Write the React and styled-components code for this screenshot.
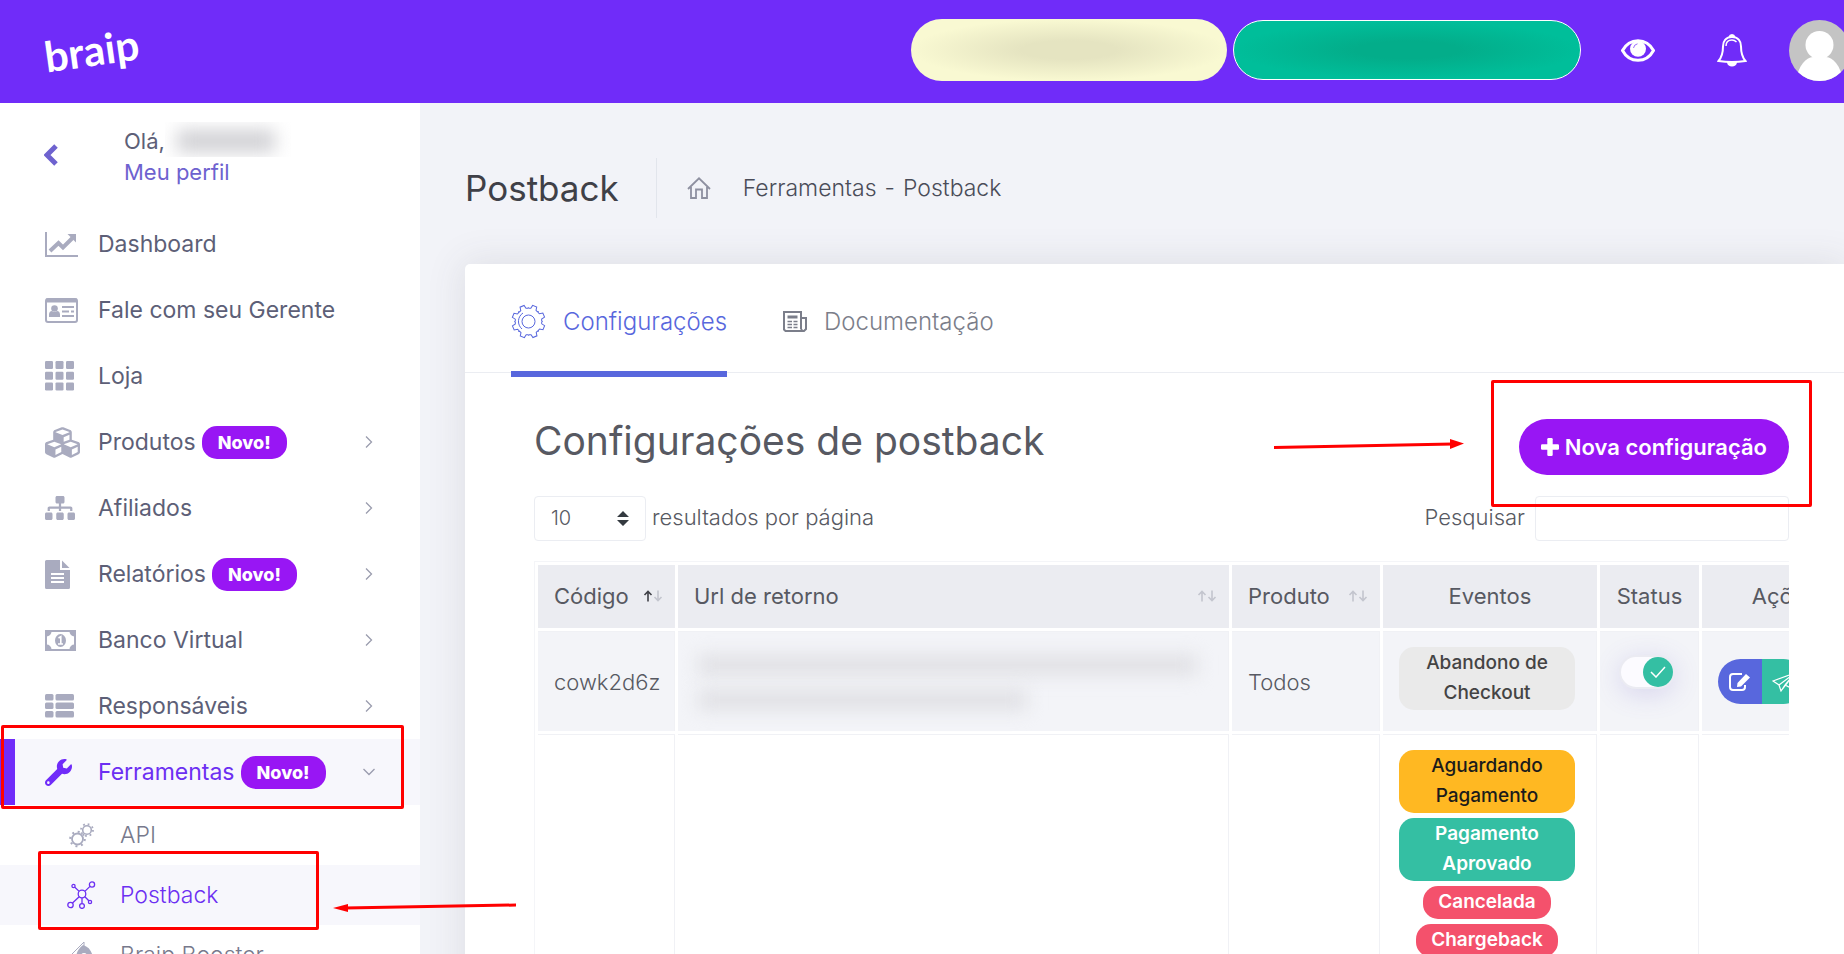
import { useState } from "react";
import styled, { createGlobalStyle } from "styled-components";
import { FaCubes, FaSitemap, FaWrench } from "react-icons/fa";

const menu = [
    { label: "Dashboard", icon: <ChartIcon /> },
    { label: "Fale com seu Gerente", icon: <CardIcon /> },
    { label: "Loja", icon: <GridIcon /> },
    { label: "Produtos", icon: <FaCubes size={35} />, isNew: true, more: true },
    { label: "Afiliados", icon: <FaSitemap size={30} />, more: true },
    { label: "Relatórios", icon: <FileIcon />, isNew: true, more: true },
    { label: "Banco Virtual", icon: <MoneyIcon />, more: true },
    { label: "Responsáveis", icon: <ListIcon />, more: true },
];

const events = [
    { label: "Aguardando Pagamento", color: "#ffb822", text: "#1b1b1b", wide: true, weight: 500 },
    { label: "Pagamento Aprovado", color: "#34bfa3", text: "#ffffff", wide: true },
    { label: "Cancelada", color: "#f4516c", text: "#ffffff" },
    { label: "Chargeback", color: "#f4516c", text: "#ffffff" },
];

export default function App() {
    const [active, setActive] = useState(true);

    return (
        <Page>
            <GlobalStyle />
            <TopBar>
                <Logo href="#">braip</Logo>
                <TopActions>
                    <Balance $color="#f9f9d2" $shade="#e5e4c1" />
                    <Balance $color="#00be9a" $shade="#03ad8a" $outlined />
                    <TopButtons>
                        <IconButton aria-label="Mostrar saldo"><EyeIcon /></IconButton>
                        <IconButton aria-label="Notificações"><BellIcon /></IconButton>
                    </TopButtons>
                    <Avatar />
                </TopActions>
            </TopBar>
            <Content>
                <Sidebar>
                    <User>
                        <BackButton aria-label="Voltar"><BackIcon /></BackButton>
                        <div>
                            <Hello>Olá,<HiddenName><span /></HiddenName></Hello>
                            <ProfileLink href="#">Meu perfil</ProfileLink>
                        </div>
                    </User>
                    <nav>
                        {menu.map((item) => (
                            <MenuItem key={item.label} href="#">
                                <MenuIcon>{item.icon}</MenuIcon>
                                {item.label}
                                {item.isNew && <NewBadge>Novo!</NewBadge>}
                                {item.more && <Chevron />}
                            </MenuItem>
                        ))}
                        <MenuItem href="#" $active>
                            <MenuIcon $active><FaWrench size={27} /></MenuIcon>
                            Ferramentas
                            <NewBadge>Novo!</NewBadge>
                            <Chevron open />
                            <ToolsFrame />
                        </MenuItem>
                        <SubItem href="#">
                            <SubIcon><CogsIcon /></SubIcon>
                            API
                        </SubItem>
                        <SubItem href="#" $active>
                            <SubIcon><NetworkIcon /></SubIcon>
                            Postback
                            <PostbackFrame />
                            <LeftArrow />
                        </SubItem>
                        <SubItem href="#">
                            <SubIcon><RocketIcon /></SubIcon>
                            Braip Booster
                        </SubItem>
                    </nav>
                </Sidebar>
                <Main>
                    <SubHeader>
                        <PageTitle>Postback</PageTitle>
                        <Breadcrumb>
                            <HomeIcon />
                            <a href="#">Ferramentas</a>
                            <span>-</span>
                            <a href="#">Postback</a>
                        </Breadcrumb>
                    </SubHeader>
                    <Card>
                        <Tabs>
                            <Tab href="#" $active><GearIcon />Configurações</Tab>
                            <Tab href="#"><NewsIcon />Documentação</Tab>
                        </Tabs>
                        <CardBody>
                            <Heading>
                                <h2>Configurações de postback</h2>
                                <NewConfig>
                                    <RightArrow />
                                    <NewButton><PlusIcon />Nova configuração</NewButton>
                                    <ButtonFrame />
                                </NewConfig>
                            </Heading>
                            <Controls>
                                <Field>
                                    <SelectBox>
                                        <select id="length" defaultValue="10">
                                            <option>10</option>
                                            <option>25</option>
                                            <option>50</option>
                                        </select>
                                        <SelectArrows />
                                    </SelectBox>
                                    <label htmlFor="length">resultados por página</label>
                                </Field>
                                <Field $gap="10px">
                                    <label htmlFor="search">Pesquisar</label>
                                    <SearchInput id="search" type="search" />
                                </Field>
                            </Controls>
                            <TableWrapper>
                                <Table>
                                    <colgroup>
                                        <Col $width="137px" />
                                        <Col />
                                        <Col $width="148px" />
                                        <Col $width="214px" />
                                        <Col $width="99px" />
                                        <Col $width="165px" />
                                    </colgroup>
                                    <thead>
                                        <tr>
                                            <Th><ThContent>Código<SortIcon up /></ThContent></Th>
                                            <Th><ThContent>Url de retorno<SortIcon /></ThContent></Th>
                                            <Th><ThContent>Produto<SortIcon /></ThContent></Th>
                                            <Th $center>Eventos</Th>
                                            <Th $center>Status</Th>
                                            <Th $center>Ações</Th>
                                        </tr>
                                    </thead>
                                    <tbody>
                                        <tr>
                                            <Td $striped>cowk2d6z</Td>
                                            <Td $striped $top>
                                                <HiddenUrl>
                                                    <HiddenLine $width="97%" />
                                                    <HiddenLine $width="64%" />
                                                </HiddenUrl>
                                            </Td>
                                            <Td $striped>Todos</Td>
                                            <Td $striped $top>
                                                <EventList>
                                                    <EventBadge $color="#eaeaea" $text="#444444" $weight={500} $wide>Abandono de Checkout</EventBadge>
                                                </EventList>
                                            </Td>
                                            <Td $striped>
                                                <Switch>
                                                    <input type="checkbox" aria-label="Status" checked={active} onChange={() => setActive(!active)} />
                                                    <Knob $on={active}><CheckIcon /></Knob>
                                                </Switch>
                                            </Td>
                                            <Td $striped>
                                                <ActionGroup>
                                                    <ActionButton $color="#5867dd" aria-label="Editar"><EditIcon /></ActionButton>
                                                    <ActionButton $color="#34bfa3" aria-label="Enviar"><PlaneIcon /></ActionButton>
                                                </ActionGroup>
                                            </Td>
                                        </tr>
                                        <tr>
                                            <Td />
                                            <Td />
                                            <Td />
                                            <Td $top>
                                                <EventList>
                                                    {events.map((event) => (
                                                        <EventBadge
                                                            key={event.label}
                                                            $color={event.color}
                                                            $text={event.text}
                                                            $weight={event.weight}
                                                            $wide={event.wide}
                                                        >
                                                            {event.label}
                                                        </EventBadge>
                                                    ))}
                                                </EventList>
                                            </Td>
                                            <Td />
                                            <Td />
                                        </tr>
                                    </tbody>
                                </Table>
                            </TableWrapper>
                        </CardBody>
                    </Card>
                </Main>
            </Content>
        </Page>
    );
}

function ChartIcon() {
    return (
        <svg width="33" height="25" viewBox="0 0 33 25" fill="none">
            <path d="M1 0v24h32" stroke="currentColor" strokeWidth="2" />
            <path d="M5 19l8.500-8 4.500 4.500L27.500 6" stroke="currentColor" strokeWidth="4" />
            <path d="M22.500 2H31v8.500z" fill="currentColor" />
        </svg>
    );
}

function CardIcon() {
    return (
        <svg width="33" height="25" viewBox="0 0 33 25" fill="none">
            <rect x="1" y="1" width="31" height="23" rx="2" stroke="currentColor" strokeWidth="2" />
            <path d="M1 2.500h31" stroke="currentColor" strokeWidth="4" />
            <circle cx="9.500" cy="10.500" r="3.300" fill="currentColor" />
            <path d="M4 19v-2.500c0-2.500 1.500-3.500 3-3.500 1.500 1.200 3.500 1.200 5 0 1.500 0 3 1 3 3.500V19z" fill="currentColor" />
            <path d="M17 9h12M17 13.500h7M26 13.500h3M17 18h12" stroke="currentColor" strokeWidth="2" />
        </svg>
    );
}

function GridIcon() {
    return (
        <svg width="29" height="30" viewBox="0 0 29 30" fill="currentColor">
            {[0, 10.700, 21.400].map((y) => [0, 10.500, 21].map((x) => (
                <rect key={`${x}-${y}`} x={x} y={y} width="8" height="8" rx="1.200" />
            )))}
        </svg>
    );
}

function FileIcon() {
    return (
        <svg width="25" height="29" viewBox="0 0 25 29" fill="currentColor">
            <path fillRule="evenodd" d="M1.500 0H15v10h10v17.500a1.500 1.500 0 0 1-1.500 1.500h-22A1.500 1.500 0 0 1 0 27.500v-26A1.500 1.500 0 0 1 1.500 0zM6 13v2h13v-2zm0 4v2h13v-2zm0 4v2h13v-2z" />
            <path d="M17 .5L24.500 8H17z" />
        </svg>
    );
}

function MoneyIcon() {
    return (
        <svg width="31" height="21" viewBox="0 0 31 21" fill="none">
            <path d="M1 1h29v19H1z" stroke="currentColor" strokeWidth="2" />
            <path d="M1 6.500A5 5 0 0 0 6.500 1H1zM30 6.500A5 5 0 0 1 24.500 1H30zM1 14.500A5 5 0 0 1 6.500 20H1zM30 14.500A5 5 0 0 0 24.500 20H30z" fill="currentColor" />
            <ellipse cx="15.500" cy="10.500" rx="5.500" ry="6.500" fill="currentColor" />
            <path d="M13.500 8l2.300-1.300V13.500M13 14h5" stroke="#ffffff" strokeWidth="1.600" />
        </svg>
    );
}

function ListIcon() {
    return (
        <svg width="29" height="24" viewBox="0 0 29 24" fill="currentColor">
            {[0, 8.500, 17].map((y) => (
                <g key={y}>
                    <rect x="0" y={y} width="8.500" height="6.500" rx="1.500" />
                    <rect x="10.500" y={y} width="18.500" height="6.500" rx="1.500" />
                </g>
            ))}
        </svg>
    );
}

function CogsIcon() {
    return (
        <svg width="29" height="25" viewBox="-2 0 29 25" fill="none" stroke="currentColor">
            <circle cx="8.500" cy="16" r="5.500" strokeWidth="1.800" />
            <circle cx="8.500" cy="16" r="7.300" strokeWidth="2" strokeDasharray="2 3.730" />
            <circle cx="18" cy="7" r="4.300" strokeWidth="1.600" />
            <circle cx="18" cy="7" r="6" strokeWidth="1.800" strokeDasharray="1.800 2.910" />
        </svg>
    );
}

function NetworkIcon() {
    return (
        <svg width="29" height="28" viewBox="0 0 29 28" fill="none" stroke="currentColor" strokeWidth="1.300">
            <circle cx="15" cy="13" r="3.800" />
            <circle cx="6.500" cy="5" r="1.600" />
            <circle cx="25" cy="3.500" r="2.600" />
            <circle cx="3.500" cy="24" r="2.700" />
            <circle cx="15" cy="25" r="2.400" />
            <circle cx="23" cy="21" r="1.600" />
            <path d="M7.800 6.200l4.400 4.200M23 5.400l-5.200 5M12.200 15.800L5.500 22M15 17v5.500M17.900 15.700l3.900 4.100" />
        </svg>
    );
}

function RocketIcon() {
    return (
        <svg width="29" height="29" viewBox="0 0 29 29">
            <path d="M4 14L17 1v4L8 18z" fill="none" stroke="currentColor" />
            <path fillRule="evenodd" d="M16 4c6 2 9 6 10 13l-7 10-10-9c0-6 2-10 7-14zm1 8a3 3 0 1 0 0 6 3 3 0 0 0 0-6z" fill="currentColor" />
        </svg>
    );
}

function BackIcon() {
    return (
        <svg width="14" height="22" viewBox="0 0 14 22" fill="none">
            <path d="M12 2L3 11l9 9" stroke="currentColor" strokeWidth="5" />
        </svg>
    );
}

function Chevron({ open }) {
    return (
        <ChevronIcon width="12" height="12" viewBox="0 0 12 12" fill="none" stroke="currentColor" strokeWidth="1.300">
            <path d={open ? "M.5 3L6 8.500 11.500 3" : "M3 .5L8.500 6 3 11.500"} />
        </ChevronIcon>
    );
}

function EyeIcon() {
    return (
        <svg width="34" height="23" viewBox="0 0 34 23">
            <path d="M1.500 11.500C5 5 11 1.700 17 1.700S29 5 32.500 11.500C29 18 23 21.300 17 21.300S5 18 1.500 11.500z" fill="none" stroke="#ffffff" strokeWidth="3" />
            <circle cx="17" cy="9.800" r="8" fill="#ffffff" />
            <path d="M12.500 9a5 5 0 0 1 4-4.200" fill="none" stroke="#702cf9" strokeWidth=".7" />
        </svg>
    );
}

function BellIcon() {
    return (
        <svg width="30" height="34" viewBox="0 0 30 34" fill="none" stroke="#ffffff" strokeWidth="2">
            <path d="M15 4C9 4 6 8 6 13.500c0 7-1.500 11-4.500 14.500 8 1.300 19 1.300 27 0C25.500 24.500 24 20.500 24 13.500 24 8 21 4 15 4z" />
            <path d="M12.500 4a2.600 2.600 0 0 1 5 0z" fill="#ffffff" />
            <path d="M11 29.500c1 4 7 4 8 0z" fill="#ffffff" />
            <path d="M9 13c0-4 2.500-6 6-6 2 0 3.500 1 4.500 2" strokeWidth="1.500" />
        </svg>
    );
}

function Avatar() {
    return (
        <AvatarIcon width="61" height="61" viewBox="0 0 61 61">
            <clipPath id="avatar"><circle cx="30.500" cy="30.500" r="30.500" /></clipPath>
            <g clipPath="url(#avatar)">
                <path d="M0 0h61v61H0z" fill="#c4c4c4" />
                <circle cx="30.500" cy="25" r="14" fill="#ffffff" />
                <path d="M7 61c2-15 10-24 17-24h13c7 0 15 9 17 24z" fill="#ffffff" />
            </g>
        </AvatarIcon>
    );
}

function HomeIcon() {
    return (
        <svg width="24" height="22" viewBox="0 0 24 22" fill="none" stroke="currentColor" strokeWidth="1.800">
            <path d="M1 12L12 1.300 23 12M4 10v11h5v-8.500h6V21h5V10" />
        </svg>
    );
}

function GearIcon() {
    const teeth = [0, 45, 90, 135, 180, 225, 270, 315];
    return (
        <svg width="35" height="35" viewBox="-17.500 -17.500 35 35" fill="none" stroke="currentColor">
            <circle r="6.500" />
            <path d="M-6.500 7.500A10 10 0 0 1-5.500-8.500" />
            {teeth.map((angle) => (
                <path key={angle} transform={`rotate(${angle + 22})`} d="M-5.400-13l.9.600 1.700-.7.600-3.400h4.400l.6 3.400 1.700.7.900-.6" />
            ))}
        </svg>
    );
}

function NewsIcon() {
    return (
        <svg width="24" height="21" viewBox="0 0 24 21" fill="none" stroke="currentColor" strokeWidth="2">
            <path d="M18 18V1H1v17.500L2.500 20H21l2-2V7h-5M18 18l1.500 2" />
            <path d="M4.500 10.500H9M10.500 10.500h4M4.500 13.500H9M10.500 13.500h4M4.500 16.500H9M10.500 16.500h4" strokeWidth="1.500" />
            <path d="M4.500 6h10" strokeWidth="3" />
        </svg>
    );
}

function PlusIcon() {
    return (
        <svg width="18" height="18" viewBox="0 0 18 18" fill="currentColor">
            <rect x="6.300" width="5.400" height="18" rx="1.200" />
            <rect y="6.300" width="18" height="5.400" rx="1.200" />
        </svg>
    );
}

function SelectArrows() {
    return (
        <svg width="12" height="15" viewBox="0 0 12 15" fill="#343a40">
            <path d="M0 6l6-6 6 6zM0 9h12l-6 6z" />
        </svg>
    );
}

function SortIcon({ up }) {
    return (
        <svg width="20" height="12" viewBox="0 0 20 12" fill="none" strokeWidth="1.600">
            <path d="M5 11.500V1.500M1.500 5L5 1.500 8.500 5" stroke={up ? "#3f4047" : "#c3c5ce"} />
            <path d="M15 .5v10M11.500 7l3.500 3.500L18.500 7" stroke="#c3c5ce" />
        </svg>
    );
}

function CheckIcon() {
    return (
        <svg width="16" height="12" viewBox="0 0 16 12" fill="none">
            <path d="M1 6l5 5 9-10" stroke="#ffffff" strokeWidth="1.500" />
        </svg>
    );
}

function EditIcon() {
    return (
        <svg width="22" height="18" viewBox="0 0 22 18" fill="none">
            <path d="M13 1H4a3 3 0 0 0-3 3v10a3 3 0 0 0 3 3h9a3 3 0 0 0 3-3v-2" stroke="#ffffff" strokeWidth="2" />
            <path d="M8 14l.5-4L17 1l4 3.500L12 13.500z" fill="#ffffff" />
        </svg>
    );
}

function PlaneIcon() {
    return (
        <svg width="24" height="20" viewBox="0 0 24 20" fill="none" stroke="#ffffff" strokeWidth="1.200">
            <path d="M1 9L23 1l-4 15-6-3-4 6-2-6zM7 13L23 1 9 19M13 13L23 1M1 9l6 4" />
        </svg>
    );
}

function LeftArrow() {
    return (
        <LeftArrowIcon width="184" height="9" viewBox="0 0 184 9">
            <path d="M12 5L183 2" stroke="#ff0000" strokeWidth="3" />
            <path d="M0 5l15-4v8z" fill="#ff0000" />
        </LeftArrowIcon>
    );
}

function RightArrow() {
    return (
        <RightArrowIcon width="192" height="12" viewBox="0 0 192 12">
            <path d="M1 8.500L180 5" stroke="#ff0000" strokeWidth="3" />
            <path d="M191 4.500L177 0v10z" fill="#ff0000" />
        </RightArrowIcon>
    );
}

const GlobalStyle = createGlobalStyle`
    * {
        box-sizing: border-box;
    }

    body {
        margin: 0;
        background-color: #f2f3f8;
        color: #575962;
        font-family: Inter, "Open Sans", sans-serif;
        font-size: 22px;
        font-weight: 300;
    }

    a {
        color: inherit;
        text-decoration: none;
    }

    button, input, select {
        font: inherit;
        color: inherit;
    }

    button {
        border: none;
        cursor: pointer;
    }
`;

const Page = styled.div`
    height: 100vh;
    display: flex;
    flex-direction: column;
    overflow: hidden;
`;

const TopBar = styled.header`
    background-color: #702cf9;
    height: 103px;
    flex-shrink: 0;
    padding: 0 0 3px 44px;
    display: flex;
    align-items: center;
    justify-content: space-between;
`;

const Logo = styled.a`
    color: #ffffff;
    font-family: Lato, sans-serif;
    font-size: 42px;
    font-weight: 700;
    line-height: 44px;
    transform: rotate(-8deg);
`;

const TopActions = styled.div`
    display: flex;
    align-items: center;
    gap: 6px;
    margin-right: -6px;
`;

const Balance = styled.div`
    width: ${(props) => (props.$outlined ? "348px" : "316px")};
    height: ${(props) => (props.$outlined ? "60px" : "62px")};
    border: ${(props) => (props.$outlined ? "1px solid #ffffff" : "none")};
    border-radius: 31px;
    background: radial-gradient(closest-side, ${(props) => props.$shade} 30%, ${(props) => props.$color});
`;

const TopButtons = styled.div`
    display: flex;
    align-items: center;
    gap: 62px;
    padding: 0 36px 0 34px;
`;

const IconButton = styled.button`
    background: none;
    padding: 0;
    display: flex;
`;

const AvatarIcon = styled.svg`
    flex-shrink: 0;
`;

const Content = styled.div`
    flex: 1;
    display: flex;
    min-height: 0;
`;

const Sidebar = styled.aside`
    width: 420px;
    flex-shrink: 0;
    background-color: #ffffff;
    position: relative;
    z-index: 1;
`;

const User = styled.div`
    height: 108px;
    padding: 23px 45px 0 44px;
    display: flex;
    gap: 66px;
    line-height: 31px;
    font-weight: 400;
`;

const BackButton = styled.button`
    background: none;
    color: #6e62cf;
    padding: 0;
    height: 58px;
    display: flex;
    align-items: center;
`;

const Hello = styled.div`
    display: flex;
    height: 31px;
    color: #5d5f77;
`;

const HiddenName = styled.span`
    width: 126px;
    height: 35px;
    margin-top: -4px;
    overflow: hidden;
    display: flex;

    span {
        flex: 1;
        margin: 8px 16px 5px 12px;
        background-color: #cfcfd3;
        filter: blur(9px);
    }
`;

const ProfileLink = styled.a`
    color: #6e62cf;
`;

const MenuItem = styled.a`
    position: relative;
    height: 66px;
    padding: 0 45px;
    display: flex;
    align-items: center;
    font-size: 23px;
    font-weight: 400;
    color: ${(props) => (props.$active ? "#6c2ff2" : "#5d5f77")};
    background-color: ${(props) => (props.$active ? "#f7f7fc" : "transparent")};
    box-shadow: ${(props) => (props.$active ? "inset 15px 0 #702cf9" : "none")};
`;

const MenuIcon = styled.span`
    width: 53px;
    display: flex;
    color: ${(props) => (props.$active ? "#702cf9" : "#a9abbf")};
`;

const NewBadge = styled.span`
    margin-left: 6px;
    padding: 0 16px;
    border-radius: 15px;
    background-color: #9816f4;
    color: #ffffff;
    font-size: 18px;
    font-weight: 800;
    line-height: 33px;
`;

const ChevronIcon = styled.svg`
    margin-left: auto;
    color: #9a9cae;
`;

const SubItem = styled.a`
    position: relative;
    height: 60px;
    padding-left: 67px;
    display: flex;
    align-items: center;
    font-size: 23px;
    color: ${(props) => (props.$active ? "#6c2ff2" : "#77798c")};
    background-color: ${(props) => (props.$active ? "#f7f7fc" : "transparent")};
`;

const SubIcon = styled.span`
    width: 53px;
    display: flex;
    color: #a9abbf;

    ${SubItem}:nth-last-child(2) & {
        color: inherit;
    }
`;

/* red marks drawn over the page */
const Frame = styled.span`
    position: absolute;
    border: 3px solid #ff0000;
    border-radius: 2px;
    pointer-events: none;
`;

const ToolsFrame = styled(Frame)`
    inset: -14px 16px -4px 1px;
`;

const PostbackFrame = styled(Frame)`
    inset: -14px 101px -5px 38px;
`;

const ButtonFrame = styled(Frame)`
    inset: -39px -23px -32px -28px;
`;

const LeftArrowIcon = styled.svg`
    position: absolute;
    left: 333px;
    top: 38px;
    pointer-events: none;
`;

const RightArrowIcon = styled.svg`
    position: absolute;
    right: 324px;
    top: 20px;
    pointer-events: none;
`;

const Main = styled.main`
    flex: 1;
    min-width: 0;
    padding-left: 45px;
`;

const SubHeader = styled.div`
    height: 161px;
    padding: 55px 0 46px;
    display: flex;
`;

const PageTitle = styled.h1`
    margin: 0;
    padding-right: 37px;
    border-right: 1px solid #e2e5ec;
    color: #3f4047;
    font-size: 35px;
    font-weight: 400;
    line-height: 60px;
`;

const Breadcrumb = styled.nav`
    padding-left: 30px;
    display: flex;
    align-items: center;
    gap: 8px;
    font-size: 23px;
    color: #4a4c58;

    svg {
        margin-right: 24px;
        color: #8e90a0;
    }
`;

const Card = styled.section`
    background-color: #ffffff;
    border-radius: 5px 0 0 0;
    box-shadow: 0 0 36px 4px rgba(69, 65, 78, 0.1);
    min-height: 100%;
`;

const Tabs = styled.nav`
    height: 109px;
    padding-left: 46px;
    border-bottom: 1px solid #ebedf2;
    display: flex;
    gap: 56px;
`;

const Tab = styled.a`
    height: 113px;
    padding-top: 8px;
    border-bottom: 6px solid ${(props) => (props.$active ? "#5867dd" : "transparent")};
    display: flex;
    align-items: center;
    gap: 17px;
    font-size: 24px;
    color: ${(props) => (props.$active ? "#5867dd" : "#7b7e8a")};
`;

const CardBody = styled.div`
    padding: 46px 55px 0 69px;
`;

const Heading = styled.div`
    display: flex;
    justify-content: space-between;
    align-items: flex-start;

    h2 {
        margin: 0;
        font-size: 39px;
        font-weight: 400;
        line-height: 44px;
    }
`;

const NewConfig = styled.div`
    position: relative;
`;

const NewButton = styled.button`
    height: 56px;
    padding: 0 22px;
    border-radius: 28px;
    background-color: #9816f4;
    color: #ffffff;
    font-weight: 600;
    display: flex;
    align-items: center;
    gap: 6px;
`;

const Controls = styled.div`
    margin: 21px 0 20px;
    display: flex;
    justify-content: space-between;
`;

const Field = styled.div`
    display: flex;
    align-items: center;
    gap: ${(props) => props.$gap || "6px"};

    label {
        padding-bottom: 4px;
    }
`;

const SelectBox = styled.span`
    position: relative;

    select {
        display: block;
        width: 112px;
        height: 45px;
        padding: 0 16px 2px;
        border: 1px solid #ebedf2;
        border-radius: 4px;
        background-color: #ffffff;
        font-size: 20px;
        appearance: none;
    }

    svg {
        position: absolute;
        right: 17px;
        top: 15px;
        pointer-events: none;
    }
`;

const SearchInput = styled.input`
    width: 254px;
    height: 45px;
    padding: 0 16px;
    border: 1px solid #ebedf2;
    border-radius: 4px;
`;

const TableWrapper = styled.div`
    overflow: hidden;
`;

const Table = styled.table`
    width: calc(100% + 82px);
    table-layout: fixed;
    border: 1px solid #f4f5f8;
    border-spacing: 3px;
`;

const Col = styled.col`
    width: ${(props) => props.$width || "auto"};
`;

const Th = styled.th`
    height: 63px;
    padding: 0 16px 2px;
    background-color: #ebecf1;
    font-weight: 400;
    font-size: 22px;
    text-align: ${(props) => (props.$center ? "center" : "left")};
`;

const ThContent = styled.span`
    display: flex;
    align-items: center;
    justify-content: space-between;
    margin-right: -4px;
`;

const Td = styled.td`
    height: 100px;
    padding: 15px 16px;
    border: solid #f0f1f5;
    border-width: 1px 1px 0 0;
    background-color: ${(props) => (props.$striped ? "#f3f4f8" : "#ffffff")};
    vertical-align: ${(props) => (props.$top ? "top" : "middle")};
`;

const HiddenUrl = styled.div`
    padding: 8px 0 0 4px;
    display: flex;
    flex-direction: column;
    gap: 15px;
`;

const HiddenLine = styled.div`
    width: ${(props) => props.$width};
    height: 20px;
    background-color: #e0e0e4;
    filter: blur(9px);
`;

const EventList = styled.div`
    display: flex;
    flex-direction: column;
    align-items: center;
    gap: 5px;
    margin-right: 5px;
`;

const EventBadge = styled.span`
    width: ${(props) => (props.$wide ? "176px" : "auto")};
    padding: 1px 15px 2px;
    border-radius: 15px;
    background-color: ${(props) => props.$color};
    color: ${(props) => props.$text};
    font-size: 19px;
    font-weight: ${(props) => props.$weight || 600};
    line-height: 30px;
    text-align: center;
`;

const Switch = styled.label`
    width: 52px;
    height: 30px;
    margin: 0 auto 19px 5px;
    border-radius: 15px;
    background-color: #fcfbff;
    box-shadow: 0 0 0 2px #ebebf2, 0 5px 28px rgba(110, 90, 200, 0.24);
    display: flex;

    input {
        position: absolute;
        opacity: 0;
    }
`;

const Knob = styled.span`
    width: 30px;
    height: 30px;
    margin-left: ${(props) => (props.$on ? "auto" : "0")};
    border-radius: 50%;
    background-color: ${(props) => (props.$on ? "#34bfa3" : "#c4c5d6")};
    display: flex;
    align-items: center;
    justify-content: center;
`;

const ActionGroup = styled.div`
    display: inline-flex;
    vertical-align: middle;
    border-radius: 23px;
    overflow: hidden;
`;

const ActionButton = styled.button`
    width: 44px;
    height: 45px;
    padding: 0;
    background-color: ${(props) => props.$color};
    display: flex;
    align-items: center;
    justify-content: center;
`;
